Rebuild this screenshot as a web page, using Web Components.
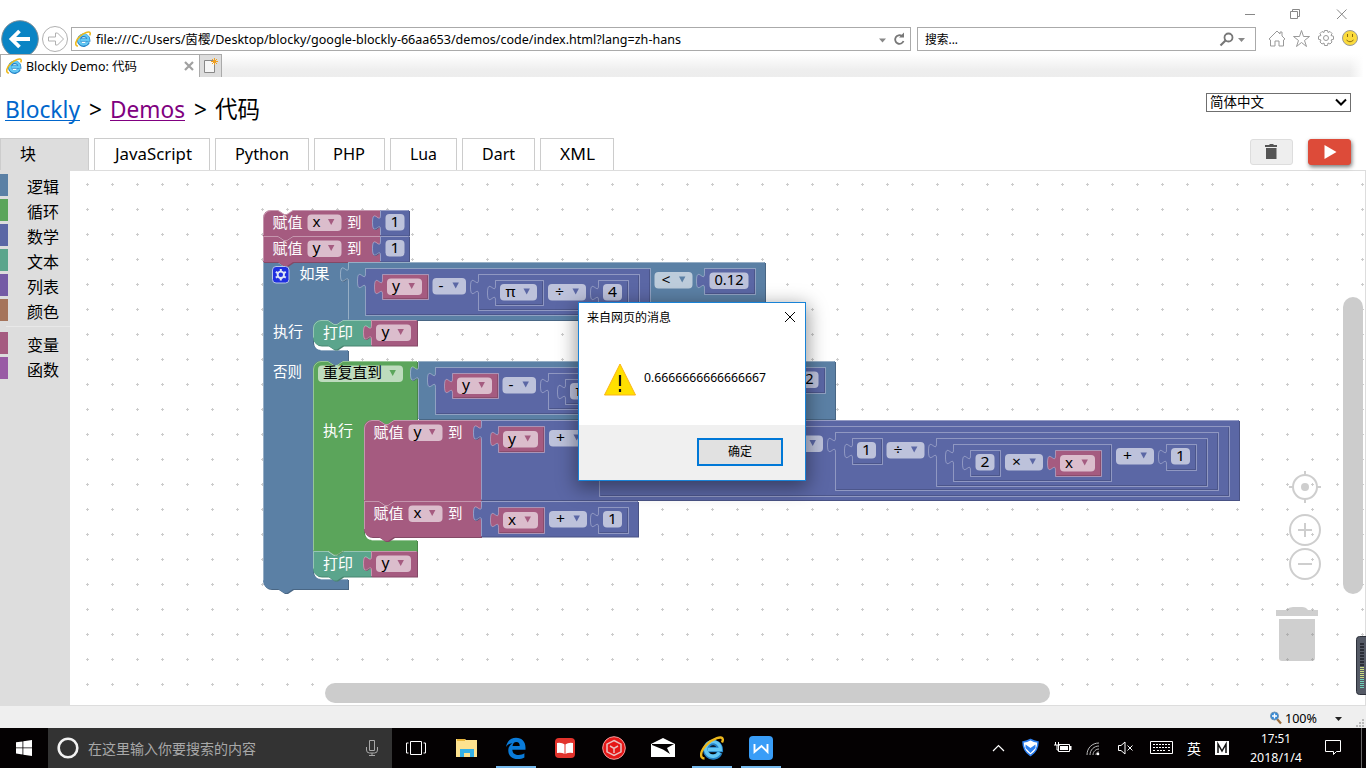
<!DOCTYPE html>
<html lang="zh-Hans">
<head>
<meta charset="utf-8">
<title>Blockly Demo: 代码</title>
<style>
html,body{margin:0;height:100%;overflow:hidden;background:#fff}
body{font-family:"Noto Sans","Noto Sans CJK SC",sans-serif;color:#000}
</style>
</head>
<body>
<desktop-screen></desktop-screen>
<script>
const define = (name, html, after) => customElements.define(name, class extends HTMLElement {
  constructor() {
    super();
    const t = document.createElement('template');
    t.innerHTML = html;
    this.attachShadow({mode: 'open'}).append(t.content.cloneNode(true));
  }
  connectedCallback() { if (after) after(this, this.shadowRoot); }
});

/* Label squeezed or stretched to a given width. */
define('fit-text', `<style>:host{display:inline-block;white-space:nowrap;flex:none}span{display:inline-block;transform-origin:0 50%}</style><span><slot></slot></span>`, (el, root) => {
  const w = +el.getAttribute('w'), s = root.querySelector('span');
  el.style.width = w + 'px';
  const real = s.getBoundingClientRect().width;
  if (real) s.style.transform = `scaleX(${w / real})`;
});

/* Internet Explorer logo. */
define('ie-logo', `<style>:host{display:block;width:16px;height:16px;flex:none}svg{display:block;width:100%;height:100%}</style>
<svg viewBox="0 0 24 24"><path d="M19.800 16.500A7.300 7.300 0 1 1 20.300 13.500H8" fill="none" stroke="#2482c6" stroke-width="5.400"/><path d="M19.400 16.500A7.300 7.300 0 1 1 20.300 13.500H8" fill="none" stroke="#63c8f4" stroke-width="3.400"/><path d="M4.500 22.500C-1 22.500 .5 14 7 8.300 13 2.500 22 -.8 22.800 3.200 23 4.500 22.500 5.500 22 6.500" fill="none" stroke="#edb81c" stroke-width="2.400"/></svg>`);

define('window-buttons', `<style>:host{display:flex;height:26px;justify-content:flex-end;padding-right:1px;box-sizing:border-box}svg{display:block;width:46px;height:28px;fill:none;stroke:#888}</style>
<svg><path d="M18 14.500h10"/></svg><svg><path d="M17.500 11.500h7v7h-7zM19.500 11.500v-2h7v7h-2"/></svg><svg><path d="M18 9.500l9.500 9.500M27.500 9.500L18 19"/></svg>`);

define('nav-row', `<style>
:host{display:flex;height:28px;overflow:visible;align-items:flex-start;font-size:12px}
svg{display:block;flex:none}
.back{margin:-6px 0 0 1px}.fwd{margin:0 0 0 3px}
.box{box-sizing:border-box;height:24px;margin-top:1px;border:1px solid #aaa;background:#fff;display:flex;align-items:center;line-height:20px}
.box fit-text{margin-top:2px}
.addr{width:840px;margin-left:2px;padding-left:3px}.addr fit-text{margin-left:5px;flex:1}
.search{width:339px;margin-left:6px;padding-left:7px}
.grow{flex:1}.icons{display:flex;margin:0 0 0 11px}
</style>
<svg class="back" width="38" height="34"><circle cx="19" cy="19" r="18.300" fill="#0a84c4" stroke="#7d8d96"/><path d="M29 19H11M18.500 11l-8 8 8 8" fill="none" stroke="#fff" stroke-width="3.800"/></svg>
<svg class="fwd" width="27" height="27"><circle cx="13" cy="13" r="12.500" fill="#fff" stroke="#b0b0b0"/><path d="M6.500 11h7V7h2l6 6-6 6h-2v-4h-7z" fill="none" stroke="#b0b0b0"/></svg>
<div class="box addr"><ie-logo></ie-logo><fit-text w="585">file:///C:/Users/茵樱/Desktop/blocky/google-blockly-66aa653/demos/code/index.html?lang=zh-hans</fit-text><span class="grow"></span>
<svg width="35" height="20"><path d="M4 9.500h7l-3.500 4z" fill="#888"/><path d="M27 7a4.300 4.300 0 1 0 1.500 5" fill="none" stroke="#777" stroke-width="1.800"/><path d="M24 8.500h5V3.500z" fill="#777"/></svg></div>
<div class="box search"><fit-text w="33">搜索...</fit-text><span class="grow"></span>
<svg width="40" height="20"><circle cx="13.500" cy="8.500" r="4" fill="none" stroke="#777" stroke-width="1.800"/><path d="M10.500 11.500l-5 5" stroke="#777" stroke-width="2.200"/><path d="M23 9h7l-3.500 4z" fill="#888"/></svg></div>
<div class="icons"><svg width="98" height="26" fill="none" stroke="#999">
<path d="M2 13l8-8 3 3V6h2v4l3 3-1.500 1v6h-4.500v-5h-4v5h-4.500v-6z"/>
<path d="M34.500 4.500l2 6h6l-5 4 2 6-5-4-5 4 2-6-5-4h6z"/>
<circle cx="59" cy="12" r="2.500"/><path d="M57.500 4.500h3l.5 2 2-1 2 2-1 2 2.500.8v3l-2.500.7 1 2-2 2-2-1-.5 2.500h-3l-.5-2.500-2 1-2-2 1-2-2.500-.7v-3l2.500-.8-1-2 2-2 2 1z"/>
<circle cx="83" cy="12" r="7.500" fill="#fbdb3d" stroke="#999"/><path d="M80.500 8v3M85.500 8v3M79.500 14q3.500 3.500 7 0" stroke="#8b6a10"/></svg></div>`);

define('tab-strip', `<style>
:host{display:flex;height:23px;background:linear-gradient(#fff,#f9f9f9 25%,#eee 70%,#ededed);font-size:12px;position:relative}
:host::after{content:"";position:absolute;right:0;top:0;width:16px;height:23px;background:linear-gradient(90deg,#fff0,#fff 85%)}
.tab{box-sizing:border-box;width:200px;border:1px solid #aaa;border-width:1px 1px 0 1px;background:#fff;display:flex;align-items:center;padding-left:5px}
.tab fit-text{margin:2px 0 0 4px;line-height:20px}
.tab svg{margin-left:46px}
.new{box-sizing:border-box;width:22px;border:1px solid #aaa;border-width:1px 1px 0 0;background:#ddd}
svg{display:block}
</style><div class="tab"><ie-logo></ie-logo><fit-text w="111">Blockly Demo: 代码</fit-text><svg width="12" height="12"><path d="M2 2l8 8M10 2l-8 8" stroke="#a0a0a0" stroke-width="2.200"/></svg></div>
<div class="new"><svg width="21" height="22"><path d="M4.500 5.500h10v12h-10z" fill="#f6f6f6" stroke="#888"/><path d="M14.500 3v7M11 6.500h7M12 4l5 5M17 4l-5 5" stroke="#f0a020" stroke-width="1"/></svg></div>`);

define('page-title', `<style>
:host{display:flex;box-sizing:border-box;height:61px;padding:0 15px 0 5px;justify-content:space-between}
h1{margin:15px 0 0;font-size:23.500px;line-height:34px;font-weight:400;display:flex}
u{text-underline-offset:2px;text-decoration-thickness:1px;text-decoration-skip-ink:none}
.b{color:#0066cc}.d{color:#800080;margin-left:8px}.g{margin-left:9px}.c{margin-left:9px}.z{margin-left:8px}
.sel{box-sizing:border-box;width:145px;height:19px;margin-top:16px;border:1px solid #6f6f6f;padding:0 3px;display:flex;justify-content:space-between;align-items:center;font-size:13.300px;line-height:17px}
</style><h1><fit-text class="b" w="75"><u>Blockly</u></fit-text><fit-text class="g" w="13">&gt;</fit-text><fit-text class="d" w="75"><u>Demos</u></fit-text><fit-text class="c" w="13">&gt;</fit-text><fit-text class="z" w="45">代码</fit-text></h1>
<div class="sel"><fit-text w="54">简体中文</fit-text><svg width="12" height="9"><path d="M1 1.500l5 5 5-5" fill="none" stroke="#000" stroke-width="2"/></svg></div>`);

define('code-tab', `<style>:host{display:block;box-sizing:border-box;height:32px;border:1px solid #ccc;border-bottom:0;font-size:16px;line-height:31px;text-align:center;background:#fff;margin-right:5px;padding-right:1px}:host([on]){background:#ddd;text-align:left;padding-left:19px}</style><slot></slot>`,
  el => el.style.width = el.getAttribute('w') + 'px');

define('tab-bar', `<style>
:host{display:flex;height:33px;box-sizing:border-box;border-bottom:1px solid #ddd;padding-right:15px}
.grow{flex:1}.btn{box-sizing:border-box;width:43px;height:26px;margin-top:1px;border-radius:3px;border:1px solid #ddd;background:#eee}
.run{background:#dd4b39;border-color:#dd4b39;margin-left:15px;box-shadow:1px 2px 4px #777}
svg{display:block}
</style>
<code-tab on w="89"><fit-text w="16">块</fit-text></code-tab><code-tab w="116"><fit-text w="77">JavaScript</fit-text></code-tab><code-tab w="94"><fit-text w="54">Python</fit-text></code-tab><code-tab w="71"><fit-text w="32">PHP</fit-text></code-tab><code-tab w="67"><fit-text w="27">Lua</fit-text></code-tab><code-tab w="73"><fit-text w="33">Dart</fit-text></code-tab><code-tab w="74"><fit-text w="35">XML</fit-text></code-tab><span class="grow"></span>
<div class="btn"><svg width="41" height="24"><path d="M14 5h4l1-1h3l1 1h3v2H14zM15 8h10.500v11H15z" fill="#555"/></svg></div>
<div class="btn run"><svg width="41" height="24"><path d="M15.500 5l12 7-12 7z" fill="#fff"/></svg></div>`);

define('tool-row', `<style>:host{display:block;box-sizing:border-box;height:22px;margin-bottom:3px;border-left:8px solid var(--c);padding-left:19px;font-size:16px;line-height:27px}</style><fit-text w="32"><slot></slot></fit-text>`);
define('tool-box', `<style>:host{display:block;box-sizing:border-box;width:70px;background:#ddd;padding-top:3px;flex:none}hr{margin:5px 0 5px 6px;border:0;border-top:1px solid #e8e8e8}</style>
<tool-row style="--c:#5b80a5">逻辑</tool-row><tool-row style="--c:#5ba55b">循环</tool-row><tool-row style="--c:#5b67a5">数学</tool-row><tool-row style="--c:#5ba58c">文本</tool-row><tool-row style="--c:#745ba5">列表</tool-row><tool-row style="--c:#a5745b">颜色</tool-row><hr><tool-row style="--c:#a55b80">变量</tool-row><tool-row style="--c:#995ba5">函数</tool-row>`);

/* Block canvas. */
const PINK='#a55b80', MATH='#5b67a5', LOGIC='#5b80a5', LOOP='#5ba55b', TEXT='#5ba58c';
const NOTCH='l 6,4 3,0 6,-4', NOTCHR='l -6,4 -3,0 -6,-4', TAB='c 0,-10 -8,8 -8,-7.5 s 8,2.5 8,-7.5';
const shade = {[PINK]:'#844966',[MATH]:'#495284',[LOGIC]:'#496684',[LOOP]:'#498449',[TEXT]:'#498470'};
const tint = 'rgba(255,255,255,.36)';
const paint = (c, d, light) => `<path d="${d}" fill="${shade[c]}" transform="translate(1,1)"/><path d="${d}" fill="${c}"/><path d="${light}" fill="none" stroke="${tint}"/>`;
const value = (c, x, y, r, b) => { const d = `M${x},${y}H${r}V${b}H${x}V${y+20}${TAB}Z`; return paint(c, d, `M${x+.5},${b-.5}V${y+20}${TAB}V${y+.5}H${r-.5}`); };
const inline = (c, x, y, r, b) => { const e = Math.round(r)+.5-1, f = Math.round(b)-.5, X = Math.floor(x)+1, Y = Math.floor(y)+1; const d = `M${X},${Y}H${e+.5}V${f+.5}H${X}V${Y+20}${TAB}Z`; return `<path d="${d}" fill="${c}" stroke="#fff" stroke-opacity=".33"/><path d="M${e-.5},${Y+1}V${f-.5}H${X+1}" fill="none" stroke="#00000028"/>`; };
const stmt = (c, x, y, r, b, top, bot) => {
  const s = top ? `M${x},${y+8}a8,8 0 0,1 8,-8H${x+15}` : `M${x},${y}H${x+15}`;
  const e = bot ? `H${x+30}${NOTCHR}H${x+8}a8,8 0 0,1 -8,-8Z` : `H${x+30}${NOTCHR}H${x}Z`;
  return paint(c, `${s}${NOTCH}H${r}V${b}${e}`, `M${x+.5},${b-(bot?8:1)}V${y+(top?8:.5)}${top?'a8,8 0 0,1 7.500,-7.500':''}H${x+15}${NOTCH}H${r}`);
};
const inner = (x, r, y, b) => `H${x+30}${NOTCHR}H${x+8}a8,8 0 0,0 -8,8V${b-8}a8,8 0 0,0 8,8H${r}`;
const label = (t, x, cy, w, fill='#fff') => `<text x="${x}" y="${cy+5.300}" textLength="${w}" lengthAdjust="spacingAndGlyphs" fill="${fill}">${t}</text>`;
const field = (c, x, y, r, t, tx, tw, drop=true) => `<rect x="${x}" y="${y}" width="${r-x}" height="16.500" rx="4" fill="#fff" fill-opacity=".6"/>${label(t, tx, y+7.600, tw, '#000')}${drop?`<path d="M${r-13.500},${y+4.500}h6.400l-3.200,6z" fill="${c}"/>`:''}`;
const op = (c, x, y, t) => field(c, x, y+.5, x + (t==='-'?33.500:38), t, x+(t==='-'?6:7), t==='-'?5:9);
const num = (x, y, t='1', w=19) => field(MATH, x, y, x+w, t, x+5, w-10, false);
const variable = (x, y, t) => inline(PINK, x, y, x+46.500, y+26) + field(PINK, x+5.500, y+5, x+40.500, t, x+10.500, 8);
/* covered: the middle of the expression lies below the dialog and needs no fields */
const condition = (x, y, covered) => value(LOGIC, x, y, x+417, y+58)
  + inline(MATH, x+17, y+6, x+302, y+53.500) + variable(x+33.500, y+11.500, 'y') + op(MATH, x+84.500, y+15.500, '-')
  + inline(MATH, x+130, y+11.500, x+291, y+48.500) + inline(MATH, x+147, y+17.500, x+195.500, y+43.500) + field(MATH, x+152, y+22, x+189, 'π', x+157.500, 10)
  + (covered ? '' : op(MATH, x+200, y+21.500, '÷') + inline(MATH, x+249.500, y+17.500, x+280, y+43.500) + num(x+255, y+22, '4') + op(LOGIC, x+306.500, y+9.500, '&lt;'))
  + inline(MATH, x+356, y+6, x+407, y+32) + num(x+361.500, y+10.500, '0.12', 39);
const setter = (x, y, r, b, t, top, bot) => stmt(PINK, x, y, r, b, top, bot) + label('赋值', x+9.500, y+12.300, 30) + field(PINK, x+44.500, y+4.500, x+78.500, t, x+49.500, 8) + label('到', x+84, y+12.300, 14.500);
const printer = (x, y, top) => stmt(TEXT, x, y, x+58, y+25.500, top, true) + label('打印', x+10, y+12.300, 30) + value(PINK, x+58, y, x+104, y+25.500) + field(PINK, x+63, y+4.500, x+98, 'y', x+68.500, 8);

const blocks = () => {
  let s = '';
  s += setter(263.500, 210.500, 380.500, 236.500, 'x', true, false) + value(MATH, 380.500, 210.500, 409.500, 236) + num(386, 214.500);
  const I = 263.500;
  const ifPath = `M${I},262.500H${I+15}${NOTCH}H348.500V320.500${inner(313.500, 348.500, 320.500, 350.500)}V361.500${inner(313.500, 348.500, 361.500, 579.500)}V589.500H${I+30}${NOTCHR}H${I+8}a8,8 0 0,1 -8,-8Z`;
  s += paint(LOGIC, ifPath, `M${I+.5},581V263H${I+15}${NOTCH}H348M321,351H348M321,580H348`);
  s += setter(263.500, 236.500, 380.500, 262.500, 'y', false, false) + value(MATH, 380.500, 236.500, 409.500, 262) + num(386, 240.500);
  s += `<rect x="273" y="267" width="16.500" height="16.500" rx="3.500" fill="#1f2fe0" stroke="#b8c6e8"/><g transform="translate(281.300,275.300)"><circle r="3.200" fill="none" stroke="#dfe6f6" stroke-width="1.900"/><path d="M0,-5.800V-3.500M0,5.800V3.500M5,-2.900L3,-1.700M-5,-2.900L-3,-1.700M5,2.900L3,1.700M-5,2.900L-3,1.700" stroke="#dfe6f6" stroke-width="2"/></g>`;
  s += label('如果', 300, 273.700, 30) + label('执行', 273.500, 332.300, 30) + label('否则', 273.500, 371.800, 29);
  s += condition(348.500, 262.500) + printer(313.500, 320.500, true);
  const L = 313.500;
  const loop = `M${L},369.500a8,8 0 0,1 8,-8H${L+15}${NOTCH}H417.500V420.500${inner(364.500, 417.500, 420.500, 540.500)}V551.500H${L+30}${NOTCHR}H${L}Z`;
  s += paint(LOOP, loop, `M${L+.5},551V369.500a8,8 0 0,1 7.500,-7.500H${L+15}${NOTCH}H417M372,541H417`);
  s += field(LOOP, 318.500, 366, 403.500, '重复直到', 323.500, 59) + label('执行', 323.500, 431.300, 30);
  s += condition(418.500, 361.500, true) + printer(313.500, 551.500, false);
  s += paint(LOOP, `M${L+15},551h15${NOTCHR}Z`, `M${L+15},551.500${NOTCH}`);
  s += setter(364.500, 420.500, 481.500, 501.500, 'y', true, false) + value(MATH, 481.500, 420.500, 1239.500, 500.500) + variable(498, 426.500, 'y') + op(MATH, 549.500, 430, '+');
  s += inline(MATH, 599.500, 426, 1229.500, 496.500) + op(MATH, 785.500, 435.500, '×') + inline(MATH, 835.500, 432.500, 1218.500, 491);
  s += inline(MATH, 852, 438.500, 882.500, 464.500) + num(857.500, 442.500) + op(MATH, 887, 442, '÷') + inline(MATH, 936.500, 438.500, 1207.500, 486.500);
  s += inline(MATH, 953.500, 444.500, 1112, 481.500) + inline(MATH, 970.500, 450.500, 1000.500, 476.500) + num(976, 454.500, '2') + op(MATH, 1005.500, 454, '×') + variable(1055, 450.500, 'x') + op(MATH, 1116.500, 448, '+');
  s += inline(MATH, 1166.500, 444.500, 1196.500, 470.500) + num(1171.500, 448.500);
  s += setter(364.500, 501.500, 481.500, 537.500, 'x', false, true) + value(MATH, 481.500, 501.500, 638.500, 537) + variable(498, 507.500, 'x') + op(MATH, 549.500, 511, '+') + inline(MATH, 598.500, 507.500, 628.500, 533.500) + num(603.500, 511.500);
  return s;
};
define('block-canvas', `<style>:host{display:block;width:1296px;height:535px;overflow:hidden}svg{display:block;font-size:15px;font-family:"Noto Sans","Noto Sans CJK SC",sans-serif}</style>
<svg width="1296" height="535" viewBox="70 171 1296 535"><defs><pattern id="grid" x="75" y="172" width="25" height="25" patternUnits="userSpaceOnUse"><path d="M11 12.500h3M12.500 11v3" stroke="#ccc"/></pattern></defs>
<rect x="70" y="171" width="1296" height="535" fill="url(#grid)"/><g class="blocks" transform="translate(-.5,-.5)"></g>
<g opacity=".6" fill="none" stroke="#afafaf" stroke-width="2"><circle cx="1305" cy="487" r="12"/><path d="M1305 471v5M1305 498v5M1289 487h5M1316 487h5"/><circle cx="1305" cy="487" r="4" fill="#afafaf" stroke="none"/><circle cx="1305" cy="530" r="15"/><path d="M1298 530h14M1305 523v14"/><circle cx="1305" cy="564" r="15"/><path d="M1298 564h14"/></g>
<g fill="#888" opacity=".4"><path d="M1276 610h10q3-3 7-3h9q4 0 6 3h10v6h-42z"/><path d="M1279 619h36v39q0 3-3 3h-30q-3 0-3-3z"/></g>
<g fill="#ccc"><rect x="1343" y="297" width="20" height="297" rx="10"/><rect x="325" y="683" width="725" height="20" rx="10"/></g>
<path d="M1365.500 171v535" stroke="#ddd"/><path d="M70 705.500h1296" stroke="#ddd"/>
<rect x="1356.500" y="636.500" width="16" height="58" rx="3" fill="#555a66" stroke="#2c303a"/><path d="M1362 643v24" stroke="#2a2d36" stroke-width="4" stroke-dasharray="2 1"/><path d="M1362 667v12" stroke="#c9dc82" stroke-width="4" stroke-dasharray="1 1"/><path d="M1362 679v10" stroke="#70d0b8" stroke-width="4" stroke-dasharray="1 1"/></svg>`,
  (el, root) => root.querySelector('.blocks').innerHTML = blocks());

define('status-bar', `<style>:host{display:flex;height:22px;background:#efefef;justify-content:flex-end;align-items:center;font-size:12px;line-height:20px;padding-top:3px;box-sizing:border-box}svg{display:block}fit-text{margin:0 16px 0 2px}</style>
<svg width="14" height="16"><path d="M8 8l4 4.500" stroke="#9b6c39" stroke-width="2.200"/><circle cx="5.500" cy="5" r="4" fill="#2d86d8" stroke="#7797b2"/><path d="M5.500 2.500v5M3 5h5" stroke="#fff" stroke-width="1.400"/></svg><fit-text w="32">100%</fit-text><svg width="33" height="20"><path d="M2 8h7l-3.500 4z" fill="#222"/><path d="M29 10h2v2h-2zM26 13h2v2h-2zM29 13h2v2h-2zM23 16h2v2h-2zM26 16h2v2h-2zM29 16h2v2h-2z" fill="#bbb"/></svg>`);

define('task-button', `<style>:host{display:flex;box-sizing:border-box;width:49px;height:40px;padding-left:3px;align-items:center;justify-content:center}:host([plain]){padding-left:1px}:host([run]){background:linear-gradient(#76b9ed,#76b9ed) 6px 100%/40px 2px no-repeat}</style><slot></slot>`);
define('task-bar', `<style>
:host{display:flex;height:40px;background:#040102;color:#fff}
svg{display:block;flex:none}ie-logo{width:24px;height:24px}
.start{width:48px;display:flex;align-items:center;justify-content:center}
.search{width:344px;box-sizing:border-box;background:#333;display:flex;align-items:center;padding:0 13px 0 8px;font-size:14px;color:#a8a8a8}
.search fit-text{margin:2px 0 0 8px;line-height:20px}.grow{flex:1}
.tray{display:flex;align-items:center}.lang{font-size:14px;line-height:20px;margin:1px 14px 0 -15px}
.clock{width:64px;font-size:12px;line-height:19px;margin:1px 17px 0 14px;display:flex;flex-direction:column;align-items:center}
</style>
<div class="start"><svg width="16" height="16"><path d="M0 2.300l6.500-.9v6.100H0zM7.300 1.300L16 0v7.500H7.300zM0 8.300h6.500v6.100L0 13.500zM7.300 8.300H16V16l-8.700-1.300z" fill="#fff"/></svg></div>
<div class="search"><svg width="24" height="24"><circle cx="12" cy="12" r="9.300" fill="none" stroke="#f2f2f2" stroke-width="2.600"/></svg><fit-text w="168">在这里输入你要搜索的内容</fit-text><span class="grow"></span><svg width="14" height="18" fill="none" stroke="#a8a8a8"><path d="M4.500 1.500h5v10h-5zM1.500 8v3q0 3 3 3h5q3 0 3-3V8M7 14v3M4 16.500h6"/></svg></div>
<task-button plain><svg width="22" height="16" fill="none" stroke="#fff"><path d="M4.500 1.500h11v13h-11zM2.500 3H.5v10h2M17.500 3h2v10h-2"/></svg></task-button>
<task-button><svg width="22" height="20"><path d="M0 1h9l1 1h11v17H0z" fill="#fde28f"/><path d="M1 1h8v2H1z" fill="#e8b63c"/><path d="M4 11h14v8h-4v-4H8v4H4z" fill="#35b1e6"/></svg></task-button>
<task-button run><svg width="22" height="22" viewBox="0 0 22 22"><path d="M1 10C2 4 6 .8 11 .8c6 0 9.500 4 9.500 9.700v2.300H7.300c.3 4 3 5.200 6.300 5.200 2.300 0 4.300-.6 5.800-1.700v4.200c-2 1-4 1.500-6.600 1.500-5.800 0-9.500-3.300-9.500-8.600 0-3.200 1.600-5.800 4.200-7.200C4.300 6.600 2.300 8 1 10zM7.500 9h7.200c0-2.600-1-4.100-3.400-4.100C9.200 4.900 7.800 6.500 7.500 9z" fill="#0a7bd9"/></svg></task-button>
<task-button><svg width="20" height="20"><rect width="20" height="20" rx="4" fill="#e2332c"/><path d="M2 5q4-1 8 1.500Q14 4 18 5v10q-4-1-8 1-4-2-8-1z" fill="#fff"/><path d="M10 6v10" stroke="#e2332c"/></svg></task-button>
<task-button><svg width="24" height="24"><circle cx="12" cy="12" r="11.300" fill="#e51717" stroke="#f0a0a0"/><path d="M12 4.500l7 3.700v7.600l-7 3.700-7-3.700V8.200zM8 10l4 2.300L16 10M12 12v5" fill="none" stroke="#e9c0c0" stroke-width="1.500"/></svg></task-button>
<task-button><svg width="24" height="20"><path d="M0 6L12 0l12 6v13H0z" fill="#fff"/><path d="M1 6h22l-7 4 3 6L12 11.500 1 7z" fill="#050203"/></svg></task-button>
<task-button run><ie-logo></ie-logo></task-button>
<task-button run><svg width="24" height="24"><rect width="24" height="24" rx="4" fill="#399df7"/><path d="M5.500 8v8l7-6 6 6V8" fill="none" stroke="#fff" stroke-width="1.900"/></svg></task-button>
<span class="grow"></span>
<div class="tray">
<svg width="216" height="30" fill="none" stroke="#fff">
<path d="M7 18l5.500-5.500L18 18" stroke-width="1.200"/>
<path d="M37 9q4-.5 7.500-2.500Q48 8.500 52 9q0 9-7.500 13.500Q37 18 37 9z" fill="#fff" stroke="#2b7ff0" stroke-width="1.500"/><path d="M39.500 11.500l5 3.500 5-3.500v3.500l-5 5-5-5z" fill="#2b7ff0" stroke="none"/>
<g transform="translate(-2 0)"><path d="M74.500 11.500h11v7h-11z"/><path d="M76 13h8v4h-8zM86 13h1.500v4H86z" fill="#fff" stroke="none"/><path d="M71.500 9v3M74.500 9v3M70 12h6M73 12v5h2"/>
<path d="M106 22c0-5 4-9 9-9M109 22c0-3.500 3-6 6-6M112 22c0-2 1-3 3-3M103 22c0-7 5-12 12-12" stroke="#bbb"/><circle cx="114" cy="21" r="1.300" fill="#fff" stroke="none"/></g>
<path d="M132.500 12.500h2.500l4-3.500v12l-4-3.500h-2.500zM141.500 12.500l5 5M146.500 12.500l-5 5"/>
<path d="M164.500 8.500h22v12h-22z"/><path d="M167 11.500h17M167 14.500h17M167 17.500h2M171 17.500h9M182 17.500h2" stroke-dasharray="2 1"/></svg>
<fit-text class="lang" w="14">英</fit-text>
<svg width="15" height="15"><rect width="14" height="14" fill="#fff"/><path d="M3 12V3l4 7 4-7v9" fill="none" stroke="#111" stroke-width="1.500"/></svg></div>
<div class="clock"><fit-text w="30">17:51</fit-text><fit-text w="52">2018/1/4</fit-text></div>
<svg width="41" height="40" fill="none" stroke="#fff"><path d="M.5 12.500h15v11h-4l-3 3v-3h-8z"/><path d="M36.500 0v40" stroke="#666"/></svg>`);

define('message-dialog', `<style>
:host{display:flex;flex-direction:column;box-sizing:border-box;position:absolute;left:578px;top:302px;width:228px;height:179px;background:#fff;border:1px solid #1883d7;box-shadow:0 5px 18px 2px #0006;font-size:12px}
header{display:flex;justify-content:space-between;height:28px;align-items:center;padding:0 9px 0 8px;line-height:20px;margin-bottom:2px}header fit-text{margin-top:2px}
main{flex:1;display:flex;padding:30px 0 0 25px}main fit-text{margin:5px 0 0 8px;line-height:20px}
footer{height:55px;background:#f0f0f0;display:flex;justify-content:flex-end;align-items:flex-start;padding:13px 22px 0 0;box-sizing:border-box}
button{box-sizing:border-box;width:86px;height:28px;border:2px solid #0078d7;background:#e1e1e1;font:12px/20px "Noto Sans","Noto Sans CJK SC",sans-serif;padding:0}
</style><header><fit-text w="84">来自网页的消息</fit-text><svg width="12" height="12"><path d="M1 1l10 10M11 1L1 11" stroke="#000"/></svg></header>
<main><svg width="32" height="34"><path d="M16 1L31.500 32H.5z" fill="#ffe000" stroke="#fbb416"/><path d="M16 12v11M16 26v3" stroke="#111" stroke-width="2.200"/></svg><fit-text w="122">0.6666666666666667</fit-text></main>
<footer><button><fit-text w="24">确定</fit-text></button></footer>`);

define('desktop-screen', `<style>:host{display:flex;flex-direction:column;width:1366px;height:768px;position:relative;overflow:hidden}.work{display:flex;height:535px;flex:none}
window-buttons,nav-row,tab-strip,page-title,tab-bar,status-bar,task-bar{flex:none}</style>
<window-buttons></window-buttons><nav-row></nav-row><tab-strip></tab-strip><page-title></page-title><tab-bar></tab-bar>
<div class="work"><tool-box></tool-box><block-canvas></block-canvas></div><status-bar></status-bar><task-bar></task-bar><message-dialog></message-dialog>`);
</script>
</body>
</html>
